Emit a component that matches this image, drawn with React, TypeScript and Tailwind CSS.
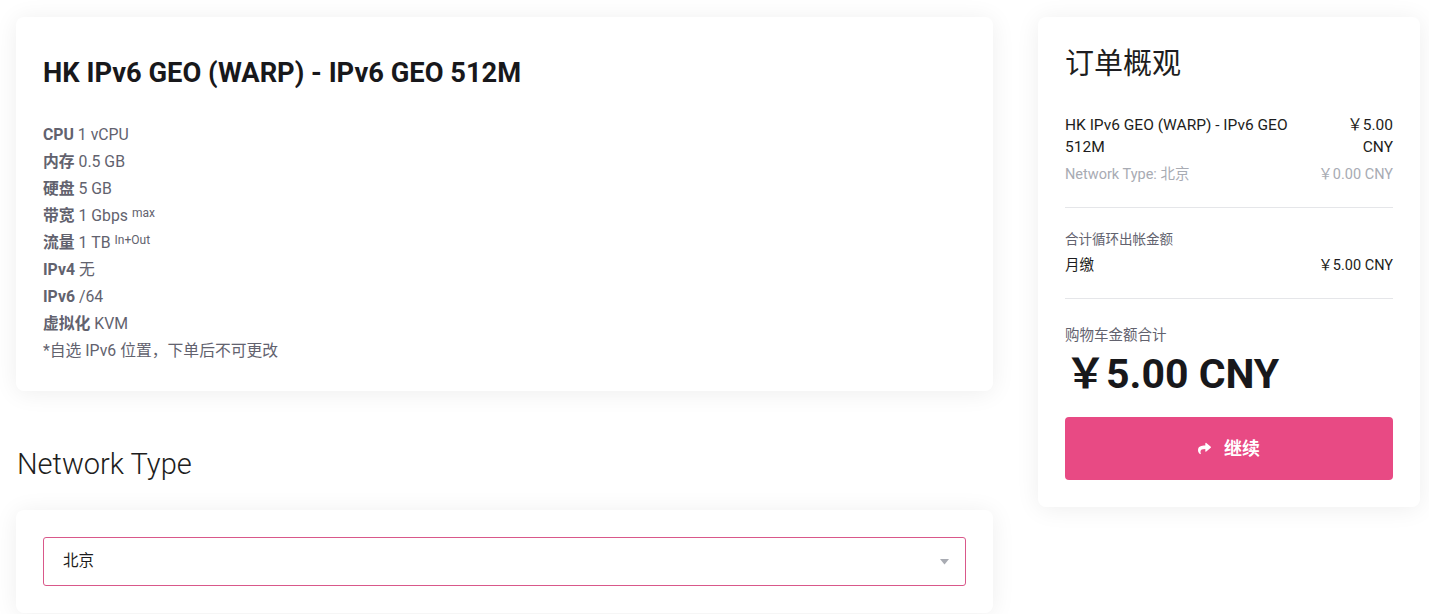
import { FaShare } from 'react-icons/fa';

const FONT = "font-['Roboto','Noto_Sans_CJK_SC',sans-serif]";

const SPECS: { label: string; value: string; sup?: string }[] = [
    { label: 'CPU', value: '1 vCPU' },
    { label: '内存', value: '0.5 GB' },
    { label: '硬盘', value: '5 GB' },
    { label: '带宽', value: '1 Gbps', sup: 'max' },
    { label: '流量', value: '1 TB', sup: 'In+Out' },
    { label: 'IPv4', value: '无' },
    { label: 'IPv6', value: '/64' },
    { label: '虚拟化', value: 'KVM' },
];

const card = 'bg-white rounded-lg shadow-[0_2px_24px_rgba(0,0,0,0.07)]';

export default function App() {
    return (
        <div className={`${FONT} bg-white min-h-[614px] flex gap-[45px] pl-4 pt-[17px] text-[#1d1d20]`}>
            {/* left column */}
            <div className="w-[977px] flex flex-col">
                <div className={`${card} px-[27px] pt-[28px] pb-[27px]`}>
                    <h1 className="text-[27.3px] font-bold leading-[56px] text-[#18181b]">
                        HK IPv6 GEO (WARP) - IPv6 GEO 512M
                    </h1>
                    <div className="mt-[20px] text-[15.8px] leading-[27px] text-[#62626e]">
                        {SPECS.map((s) => (
                            <div key={s.label}>
                                <span className="font-bold">{s.label}</span> {s.value}
                                {s.sup && <sup className="text-[12px] ml-1 relative -top-[4px]">{s.sup}</sup>}
                            </div>
                        ))}
                        <div>*自选 IPv6 位置，下单后不可更改</div>
                    </div>
                </div>

                <h2 className="mt-[56px] mb-[29px] text-[29px] font-light leading-[34px] ml-px">Network Type</h2>

                <div className={`${card} p-[27px]`}>
                    <div className="h-[49px] border border-[#d9588a] rounded-[3px] flex items-center justify-between pl-[19px] pr-[16px]">
                        <span className="text-[15.5px] text-[#1d1d20]">北京</span>
                        <svg width="9" height="6" viewBox="0 0 9 6" className="mt-px">
                            <path d="M0 0h9L4.5 5.5z" fill="#a9acb3" />
                        </svg>
                    </div>
                </div>
            </div>

            {/* order summary */}
            <div className="w-[382px]">
                <div className={`${card} px-[27px] pt-[26px] pb-[27px]`}>
                    <h2 className="text-[29px] leading-[42px] text-[#1d1d20]">订单概观</h2>

                    <div className="mt-[29px] flex justify-between gap-4 text-[15.5px] leading-[22px] text-[#1d1d20]">
                        <span>HK IPv6 GEO (WARP) - IPv6 GEO 512M</span>
                        <span className="text-right w-[54px] shrink-0">￥5.00 CNY</span>
                    </div>
                    <div className="mt-[6px] flex justify-between text-[14.5px] leading-[22px] text-[#a8abb3]">
                        <span>Network Type: 北京</span>
                        <span>￥0.00 CNY</span>
                    </div>

                    <div className="mt-[21px] border-t border-[#e5e6e9]" />

                    <div className="pt-[21px] text-[13.5px] leading-[20px] text-[#62626e]">合计循环出帐金额</div>
                    <div className="mt-[7px] flex justify-between text-[14.5px] leading-[20px] text-[#1d1d20]">
                        <span>月缴</span>
                        <span>￥5.00 CNY</span>
                    </div>

                    <div className="mt-[22px] border-t border-[#e5e6e9]" />

                    <div className="pt-[27px] text-[14.5px] leading-[20px] text-[#62626e]">购物车金额合计</div>
                    <div className="mt-[3px] text-[41px] font-bold leading-[50px] text-[#18181b]">￥5.00 CNY</div>

                    <button className="mt-[18px] w-full h-[63px] rounded bg-[#e84a84] text-white flex items-center justify-center gap-[13px] text-[18px] font-bold">
                        <FaShare size={13} />
                        继续
                    </button>
                </div>
            </div>
        </div>
    );
}
